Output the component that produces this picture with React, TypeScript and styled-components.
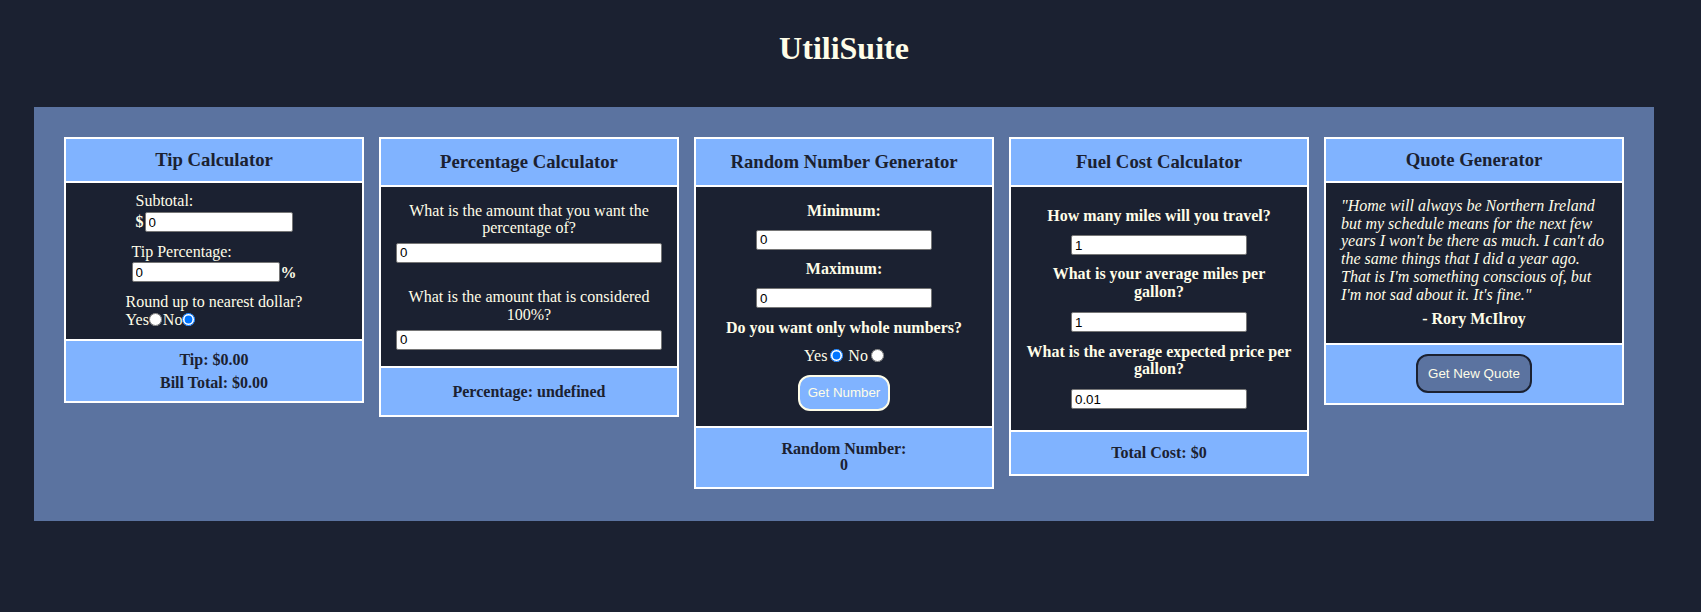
import React from "react";
import styled, { createGlobalStyle } from "styled-components";

const C = {
  bg: "#1b2131",
  panel: "#5b73a0",
  light: "#80b3ff",
  cream: "#fffde8",
  line: "#ffffff",
};

const GlobalStyle = createGlobalStyle`
  html, body { background: ${C.bg}; }
  body {
    margin: 8px;
    font-family: "Liberation Serif", "Times New Roman", serif;
    color: ${C.cream};
    line-height: 1.107;
    font-size: 16px;
  }
`;

const Page = styled.div`
  width: 1672px;
  display: flex;
  flex-direction: column;
  align-items: center;
`;

const Title = styled.h1`
  margin: 23.4px 0 0;
  font-size: 32px;
  font-weight: bold;
  line-height: 1.107;
  color: ${C.cream};
`;

const Panel = styled.main`
  box-sizing: border-box;
  width: 1620px;
  margin-top: 40px;
  padding: 30px 30px 32px;
  background: ${C.panel};
  display: flex;
  align-items: flex-start;
  gap: 15px;
`;

const Card = styled.section`
  box-sizing: border-box;
  width: 300px;
  border: 2px solid ${C.line};
  display: flex;
  flex-direction: column;
`;

const CardHeader = styled.header<{ $pad: number }>`
  background: ${C.light};
  padding: ${(p) => p.$pad + 1}px 10px ${(p) => p.$pad - 1}px;
  text-align: center;
`;

const CardTitle = styled.h3`
  margin: 0;
  font-size: 18.72px;
  font-weight: bold;
  line-height: 1.107;
  color: ${C.bg};
`;

const CardBody = styled.div<{ $pad: string; $gap?: number; $align?: string }>`
  background: ${C.bg};
  border-top: 2px solid ${C.line};
  border-bottom: 2px solid ${C.line};
  padding: ${(p) => p.$pad};
  display: flex;
  flex-direction: column;
  align-items: ${(p) => p.$align || "center"};
  gap: ${(p) => p.$gap || 0}px;
  text-align: center;
`;

const CardFooter = styled.footer<{ $pad: number; $gap?: number; $lh?: string }>`
  background: ${C.light};
  color: ${C.bg};
  font-weight: bold;
  padding: ${(p) => p.$pad}px 10px;
  display: flex;
  flex-direction: column;
  align-items: center;
  gap: ${(p) => p.$gap || 0}px;
  line-height: ${(p) => p.$lh || "1.107"};
  text-align: center;
`;

const FieldGroup = styled.div`
  display: flex;
  flex-direction: column;
  align-items: stretch;
  text-align: left;
`;

const Label = styled.div<{ $bold?: boolean }>`
  font-weight: ${(p) => (p.$bold ? "bold" : "normal")};
`;

const InputRow = styled.div<{ $mt: number }>`
  display: flex;
  align-items: center;
  gap: 1px;
  margin-top: ${(p) => p.$mt}px;
`;

const Sym = styled.span`
  font-weight: bold;
`;

const TextInput = styled.input<{ $w?: string; $mt?: number }>`
  box-sizing: border-box;
  width: ${(p) => p.$w || "176px"};
  height: 20px;
  margin: ${(p) => p.$mt || 0}px 0 0;
  padding: 1px 3px;
  border: 1px solid #767676;
  border-radius: 2px;
  background: #fff;
  color: #000;
  font-family: "Liberation Sans", Arial, sans-serif;
  font-size: 13.33px;
  outline: none;
`;

const RadioRow = styled.div<{ $spaced?: boolean }>`
  display: flex;
  align-items: center;
  height: 17.7px;
  gap: ${(p) => (p.$spaced ? "3px" : "0")};
`;

const Radio = styled.input<{ $mr?: number }>`
  width: 13px;
  height: 13px;
  margin: 0 ${(p) => p.$mr || 0}px 0 0;
`;

const PercentGroup = styled.div<{ $mt?: number }>`
  display: flex;
  flex-direction: column;
  margin-top: ${(p) => p.$mt || 0}px;
`;

const Button = styled.button<{ $variant: "light" | "panel"; $pad: number }>`
  box-sizing: border-box;
  padding: ${(p) => p.$pad}px;
  border-radius: 12px;
  border: 2px solid ${(p) => (p.$variant === "light" ? C.cream : C.bg)};
  background: ${(p) => (p.$variant === "light" ? C.light : C.panel)};
  color: ${C.cream};
  font-family: "Liberation Sans", Arial, sans-serif;
  font-size: 13.33px;
  line-height: 1.149;
  cursor: pointer;
`;

const QuoteText = styled.p`
  margin: 0;
  font-style: italic;
  text-align: left;
`;

const Author = styled.p`
  margin: 7px 0 0;
  font-weight: bold;
  text-align: center;
`;

const FuelLabel = styled(Label)<{ $mt?: number }>`
  margin-top: ${(p) => p.$mt || 0}px;
`;

function TipCalculator() {
  return (
    <Card>
      <CardHeader $pad={10.5}>
        <CardTitle>Tip Calculator</CardTitle>
      </CardHeader>
      <CardBody $pad="9.5px 0 11px" $gap={10.5}>
        <FieldGroup>
          <Label>Subtotal:</Label>
          <InputRow $mt={2.5}>
            <Sym>$</Sym>
            <TextInput $w="148px" defaultValue="0" />
          </InputRow>
        </FieldGroup>
        <FieldGroup>
          <Label>Tip Percentage:</Label>
          <InputRow $mt={2}>
            <TextInput $w="148px" defaultValue="0" />
            <Sym>%</Sym>
          </InputRow>
        </FieldGroup>
        <FieldGroup>
          <Label>Round up to nearest dollar?</Label>
          <RadioRow>
            Yes
            <Radio type="radio" name="round" $mr={1} />
            No
            <Radio type="radio" name="round" defaultChecked />
          </RadioRow>
        </FieldGroup>
      </CardBody>
      <CardFooter $pad={9.5} $gap={5.5}>
        <div>Tip: $0.00</div>
        <div>Bill Total: $0.00</div>
      </CardFooter>
    </Card>
  );
}

function PercentageCalculator() {
  return (
    <Card>
      <CardHeader $pad={12.5}>
        <CardTitle>Percentage Calculator</CardTitle>
      </CardHeader>
      <CardBody $pad="15px 15px 16px" $align="stretch">
        <PercentGroup>
          <Label>What is the amount that you want the percentage of?</Label>
          <TextInput $w="100%" $mt={6} defaultValue="0" />
        </PercentGroup>
        <PercentGroup $mt={25.5}>
          <Label>What is the amount that is considered 100%?</Label>
          <TextInput $w="100%" $mt={6} defaultValue="0" />
        </PercentGroup>
      </CardBody>
      <CardFooter $pad={14.8}>
        <div>Percentage: undefined</div>
      </CardFooter>
    </Card>
  );
}

function RandomGenerator() {
  return (
    <Card>
      <CardHeader $pad={12.5}>
        <CardTitle>Random Number Generator</CardTitle>
      </CardHeader>
      <CardBody $pad="15px" $gap={10.5}>
        <Label $bold>Minimum:</Label>
        <TextInput defaultValue="0" />
        <Label $bold>Maximum:</Label>
        <TextInput defaultValue="0" />
        <Label $bold>Do you want only whole numbers?</Label>
        <RadioRow $spaced>
          Yes
          <Radio type="radio" name="whole" defaultChecked $mr={2} />
          No
          <Radio type="radio" name="whole" />
        </RadioRow>
        <Button $variant="light" $pad={8}>
          Get Number
        </Button>
      </CardBody>
      <CardFooter $pad={13} $lh="16.5px">
        <div>Random Number:</div>
        <div>0</div>
      </CardFooter>
    </Card>
  );
}

function FuelCalculator() {
  return (
    <Card>
      <CardHeader $pad={12.5}>
        <CardTitle>Fuel Cost Calculator</CardTitle>
      </CardHeader>
      <CardBody $pad="20px 15px 21px">
        <FuelLabel $bold>How many miles will you travel?</FuelLabel>
        <TextInput $mt={11.2} defaultValue="1" />
        <FuelLabel $bold $mt={10}>
          What is your average miles per gallon?
        </FuelLabel>
        <TextInput $mt={11.5} defaultValue="1" />
        <FuelLabel $bold $mt={10.3}>
          What is the average expected price per gallon?
        </FuelLabel>
        <TextInput $mt={11} defaultValue="0.01" />
      </CardBody>
      <CardFooter $pad={12}>
        <div>Total Cost: $0</div>
      </CardFooter>
    </Card>
  );
}

function QuoteGenerator() {
  return (
    <Card>
      <CardHeader $pad={10.5}>
        <CardTitle>Quote Generator</CardTitle>
      </CardHeader>
      <CardBody $pad="14.5px 15px 15px" $align="stretch">
        <QuoteText>
          "Home will always be Northern Ireland but my schedule means for the next few years I
          won't be there as much. I can't do the same things that I did a year ago. That is I'm
          something conscious of, but I'm not sad about it. It's fine."
        </QuoteText>
        <Author>- Rory McIlroy</Author>
      </CardBody>
      <CardFooter $pad={9.2}>
        <Button $variant="panel" $pad={10}>
          Get New Quote
        </Button>
      </CardFooter>
    </Card>
  );
}

export default function App() {
  return (
    <>
      <GlobalStyle />
      <Page>
        <Title>UtiliSuite</Title>
        <Panel>
          <TipCalculator />
          <PercentageCalculator />
          <RandomGenerator />
          <FuelCalculator />
          <QuoteGenerator />
        </Panel>
      </Page>
    </>
  );
}
